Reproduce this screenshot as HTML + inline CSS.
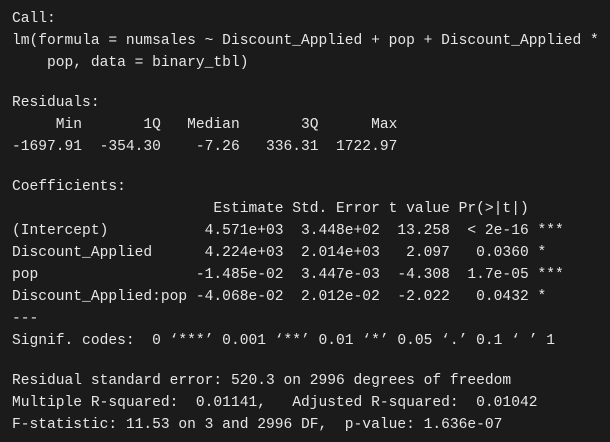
<!DOCTYPE html>
<html><head><meta charset="utf-8"><style>
html,body{margin:0;padding:0;background:#1b1b1b;width:610px;height:442px;overflow:hidden}
pre{margin:0;position:absolute;left:12px;top:8px;font-family:"Liberation Mono","DejaVu Sans Mono",monospace;font-size:14.6px;line-height:22px;color:#e6e6e6;white-space:pre}
.g{height:18px}
</style></head><body><pre>Call:
lm(formula = numsales ~ Discount_Applied + pop + Discount_Applied * 
    pop, data = binary_tbl)
<div class="g"></div>Residuals:
     Min       1Q   Median       3Q      Max 
-1697.91  -354.30    -7.26   336.31  1722.97 
<div class="g"></div>Coefficients:
                       Estimate Std. Error t value Pr(&gt;|t|)    
(Intercept)           4.571e+03  3.448e+02  13.258  &lt; 2e-16 ***
Discount_Applied      4.224e+03  2.014e+03   2.097   0.0360 *  
pop                  -1.485e-02  3.447e-03  -4.308  1.7e-05 ***
Discount_Applied:pop -4.068e-02  2.012e-02  -2.022   0.0432 *  
---
Signif. codes:  0 ‘***’ 0.001 ‘**’ 0.01 ‘*’ 0.05 ‘.’ 0.1 ‘ ’ 1
<div class="g"></div>Residual standard error: 520.3 on 2996 degrees of freedom
Multiple R-squared:  0.01141,	Adjusted R-squared:  0.01042 
F-statistic: 11.53 on 3 and 2996 DF,  p-value: 1.636e-07</pre></body></html>
